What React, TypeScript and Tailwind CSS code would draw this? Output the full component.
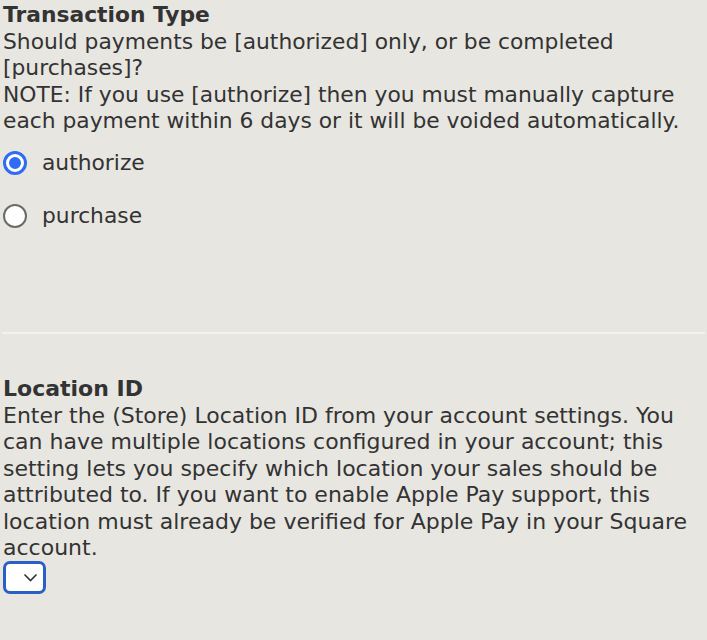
import { useState } from 'react';

export default function App() {
  const [txType, setTxType] = useState('authorize');

  return (
    <div className="min-h-screen bg-[#e7e6e1] text-[#333333] font-['Verdana','DejaVu_Sans',sans-serif] overflow-hidden">
      <section className="px-[3px] pt-[2px] h-[332px]">
        <h2 className="text-[21.8px] leading-[26.5px] font-bold">Transaction Type</h2>
        <p className="text-[21.8px] leading-[26.5px]">
          Should payments be [authorized] only, or be completed [purchases]?
          <br />
          NOTE: If you use [authorize] then you must manually capture each payment within 6 days or it will be voided automatically.
        </p>
        <div className="mt-[16px] flex flex-col gap-[29px]">
          {['authorize', 'purchase'].map((opt) => (
            <label key={opt} className="flex items-center gap-[15px] text-[21.8px] leading-[24px]">
              <span
                className={`w-[24px] h-[24px] rounded-full flex items-center justify-center ${
                  txType === opt ? 'bg-[#2f6bf5] border-[3px] border-[#2f6bf5]' : 'bg-white border-[2px] border-[#6b6b6b]'
                }`}
                onClick={() => setTxType(opt)}
              >
                {txType === opt && <span className="w-full h-full rounded-full border-[3px] border-white bg-[#2f6bf5]" />}
              </span>
              {opt}
            </label>
          ))}
        </div>
      </section>

      <div className="h-[2px] bg-[#f3f2ef] mx-[2px]" />

      <section className="px-[3px] pt-[42px]">
        <h2 className="text-[22px] leading-[26.5px] font-bold">Location ID</h2>
        <p className="max-w-[690px] text-[22px] leading-[26.5px]">
          Enter the (Store) Location ID from your account settings. You can have multiple locations configured in your account; this setting lets you specify which location your sales should be attributed to. If you want to enable Apple Pay support, this location must already be verified for Apple Pay in your Square account.
        </p>
        <button className="mt-[-1px] w-[43px] h-[33px] rounded-[7px] border-[3px] border-[#2a5fc5] bg-white flex items-center justify-end pr-[5px]">
          <svg width="15" height="9" viewBox="0 0 15 9" fill="none" stroke="#333" strokeWidth="1.6">
            <path d="M1.5 1.5l6 6 6-6" />
          </svg>
        </button>
      </section>
    </div>
  );
}
